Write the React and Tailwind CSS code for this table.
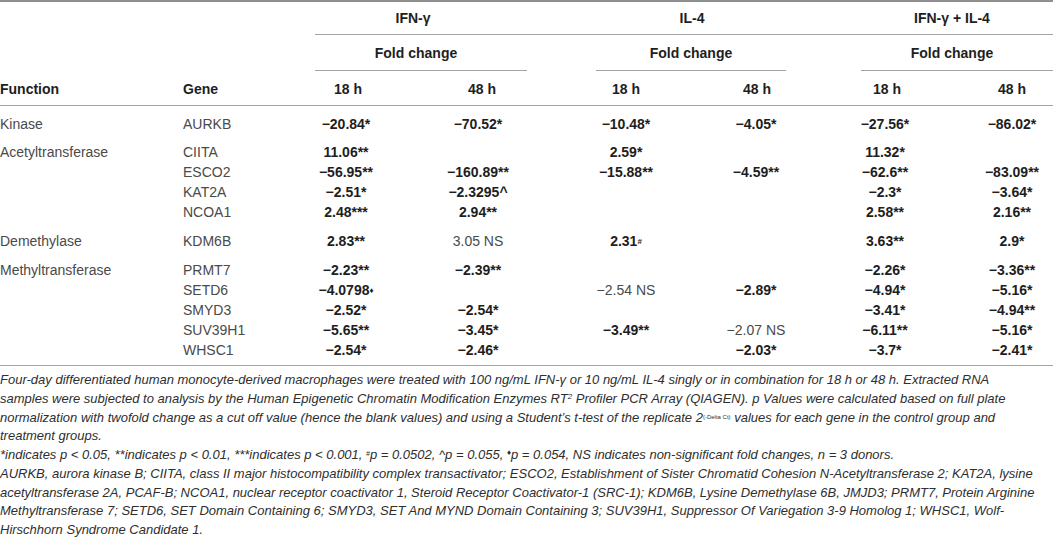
import React from "react";

const M = "\u2212";

const groups = [
  {
    fn: "Kinase",
    pt: "pt-[8px]",
    rows: [["AURKB", [`${M}20.84*`, `${M}70.52*`, `${M}10.48*`, `${M}4.05*`, `${M}27.56*`, `${M}86.02*`]]],
  },
  {
    fn: "Acetyltransferase",
    pt: "pt-[8px]",
    rows: [
      ["CIITA", ["11.06**", "", "2.59*", "", "11.32*", ""]],
      ["ESCO2", [`${M}56.95**`, `${M}160.89**`, `${M}15.88**`, `${M}4.59**`, `${M}62.6**`, `${M}83.09**`]],
      ["KAT2A", [`${M}2.51*`, `${M}2.3295^`, "", "", `${M}2.3*`, `${M}3.64*`]],
      ["NCOA1", ["2.48***", "2.94**", "", "", "2.58**", "2.16**"]],
    ],
  },
  {
    fn: "Demethylase",
    pt: "pt-[9px]",
    rows: [["KDM6B", ["2.83**", { r: "3.05 NS" }, { b: "2.31", s: "#" }, "", "3.63**", "2.9*"]]],
  },
  {
    fn: "Methyltransferase",
    pt: "pt-[9px]",
    rows: [
      ["PRMT7", [`${M}2.23**`, `${M}2.39**`, "", "", `${M}2.26*`, `${M}3.36**`]],
      ["SETD6", [{ b: `${M}4.0798`, s: "\u2666" }, "", { r: `${M}2.54 NS` }, `${M}2.89*`, `${M}4.94*`, `${M}5.16*`]],
      ["SMYD3", [`${M}2.52*`, `${M}2.54*`, "", "", `${M}3.41*`, `${M}4.94**`]],
      ["SUV39H1", [`${M}5.65**`, `${M}3.45*`, `${M}3.49**`, { r: `${M}2.07 NS` }, `${M}6.11**`, `${M}5.16*`]],
      ["WHSC1", [`${M}2.54*`, `${M}2.46*`, "", `${M}2.03*`, `${M}3.7*`, `${M}2.41*`]],
    ],
  },
];

const gridCols = "grid grid-cols-[183px_100px_126px_138px_158px_102px_156px_98px]";

function Cell({ v }) {
  if (!v) return <div />;
  if (typeof v === "string")
    return <div className="text-center font-bold text-[#1e1e1e] whitespace-nowrap">{v}</div>;
  if (v.r)
    return <div className="text-center text-[#4a4a4a] whitespace-nowrap">{v.r}</div>;
  return (
    <div className="text-center font-bold text-[#1e1e1e] whitespace-nowrap">
      {v.b}
      <sup className="text-[8px] font-bold relative -top-[2px]">{v.s}</sup>
    </div>
  );
}

export default function App() {
  const lineC = "border-[#a3a3a3]";
  return (
    <div className="w-[1053px] h-[539px] overflow-hidden bg-white font-['Liberation_Sans',Arial,sans-serif] text-[14px] text-[#3a3a3a]">
      <div className="w-[1061px]">
        {/* header row 1 */}
        <div className="border-t-2 border-[#8f8f8f] flex h-[35px]">
          <div className="w-[315px] shrink-0" />
          <div className={`flex-1 flex items-center border-b ${lineC} font-bold text-[#1e1e1e]`}>
            <div className="w-[196px] text-center">IFN-&#947;</div>
            <div className="w-[362px] text-center">IL-4</div>
            <div className="w-[158px] text-center">IFN-&#947; + IL-4</div>
          </div>
        </div>
        {/* header row 2 */}
        <div className="flex h-[36px] font-bold text-[#1e1e1e]">
          <div className="w-[315px] shrink-0" />
          <div className={`w-[212px] shrink-0 border-b ${lineC} flex items-center justify-center pr-[10px] pt-[2px]`}>Fold change</div>
          <div className="w-[69px] shrink-0" />
          <div className={`w-[190px] shrink-0 border-b ${lineC} flex items-center justify-center pt-[2px]`}>Fold change</div>
          <div className="w-[75px] shrink-0" />
          <div className={`w-[192px] shrink-0 border-b ${lineC} flex items-center justify-center pr-[10px] pt-[2px]`}>Fold change</div>
        </div>
        {/* header row 3 */}
        <div className={`${gridCols} h-[35px] items-center border-b ${lineC} font-bold text-[#1e1e1e] pt-[2px]`}>
          <div>Function</div>
          <div>Gene</div>
          <div className="text-center pl-[4px]">18 h</div>
          <div className="text-center pl-[8px]">48 h</div>
          <div className="text-center">18 h</div>
          <div className="text-center pl-[2px]">48 h</div>
          <div className="text-center pl-[4px]">18 h</div>
          <div className="text-center">48 h</div>
        </div>
        {/* body */}
        <div className={`border-b ${lineC} pb-[5px]`}>
          {groups.map((g) => (
            <div key={g.fn} className={g.pt}>
              {g.rows.map(([gene, vals], i) => (
                <div key={gene} className={`${gridCols} h-[20px] items-center`}>
                  <div className="text-[#4a4a4a]">{i === 0 ? g.fn : ""}</div>
                  <div className="text-[#4a4a4a]">{gene}</div>
                  {vals.map((v, j) => (
                    <Cell key={j} v={v} />
                  ))}
                </div>
              ))}
            </div>
          ))}
        </div>
      </div>
      {/* footnotes */}
      <div className="pt-[5px] italic text-[13px] leading-[18.75px] text-[#2e2e2e] whitespace-nowrap">
        <div>Four-day differentiated human monocyte-derived macrophages were treated with 100 ng/mL IFN-&#947; or 10 ng/mL IL-4 singly or in combination for 18 h or 48 h. Extracted RNA</div>
        <div>
          samples were subjected to analysis by the Human Epigenetic Chromatin Modification Enzymes RT
          <sup className="text-[8px]">2</sup> Profiler PCR Array (QIAGEN). p Values were calculated based on full plate
        </div>
        <div>
          normalization with twofold change as a cut off value (hence the blank values) and using a Student&#8217;s t-test of the replicate 2
          <sup className="text-[6px] not-italic">(-Delta Ct)</sup> values for each gene in the control group and
        </div>
        <div>treatment groups.</div>
        <div>
          *indicates p &lt; 0.05, **indicates p &lt; 0.01, ***indicates p &lt; 0.001, <sup className="text-[7px]">#</sup>p = 0.0502, ^p = 0.055,{" "}
          <sup className="text-[8px] not-italic">&#9830;</sup>p = 0.054, NS indicates non-significant fold changes, n = 3 donors.
        </div>
        <div>AURKB, aurora kinase B; CIITA, class II major histocompatibility complex transactivator; ESCO2, Establishment of Sister Chromatid Cohesion N-Acetyltransferase 2; KAT2A, lysine</div>
        <div>acetyltransferase 2A, PCAF-B; NCOA1, nuclear receptor coactivator 1, Steroid Receptor Coactivator-1 (SRC-1); KDM6B, Lysine Demethylase 6B, JMJD3; PRMT7, Protein Arginine</div>
        <div>Methyltransferase 7; SETD6, SET Domain Containing 6; SMYD3, SET And MYND Domain Containing 3; SUV39H1, Suppressor Of Variegation 3-9 Homolog 1; WHSC1, Wolf-</div>
        <div>Hirschhorn Syndrome Candidate 1.</div>
      </div>
    </div>
  );
}
